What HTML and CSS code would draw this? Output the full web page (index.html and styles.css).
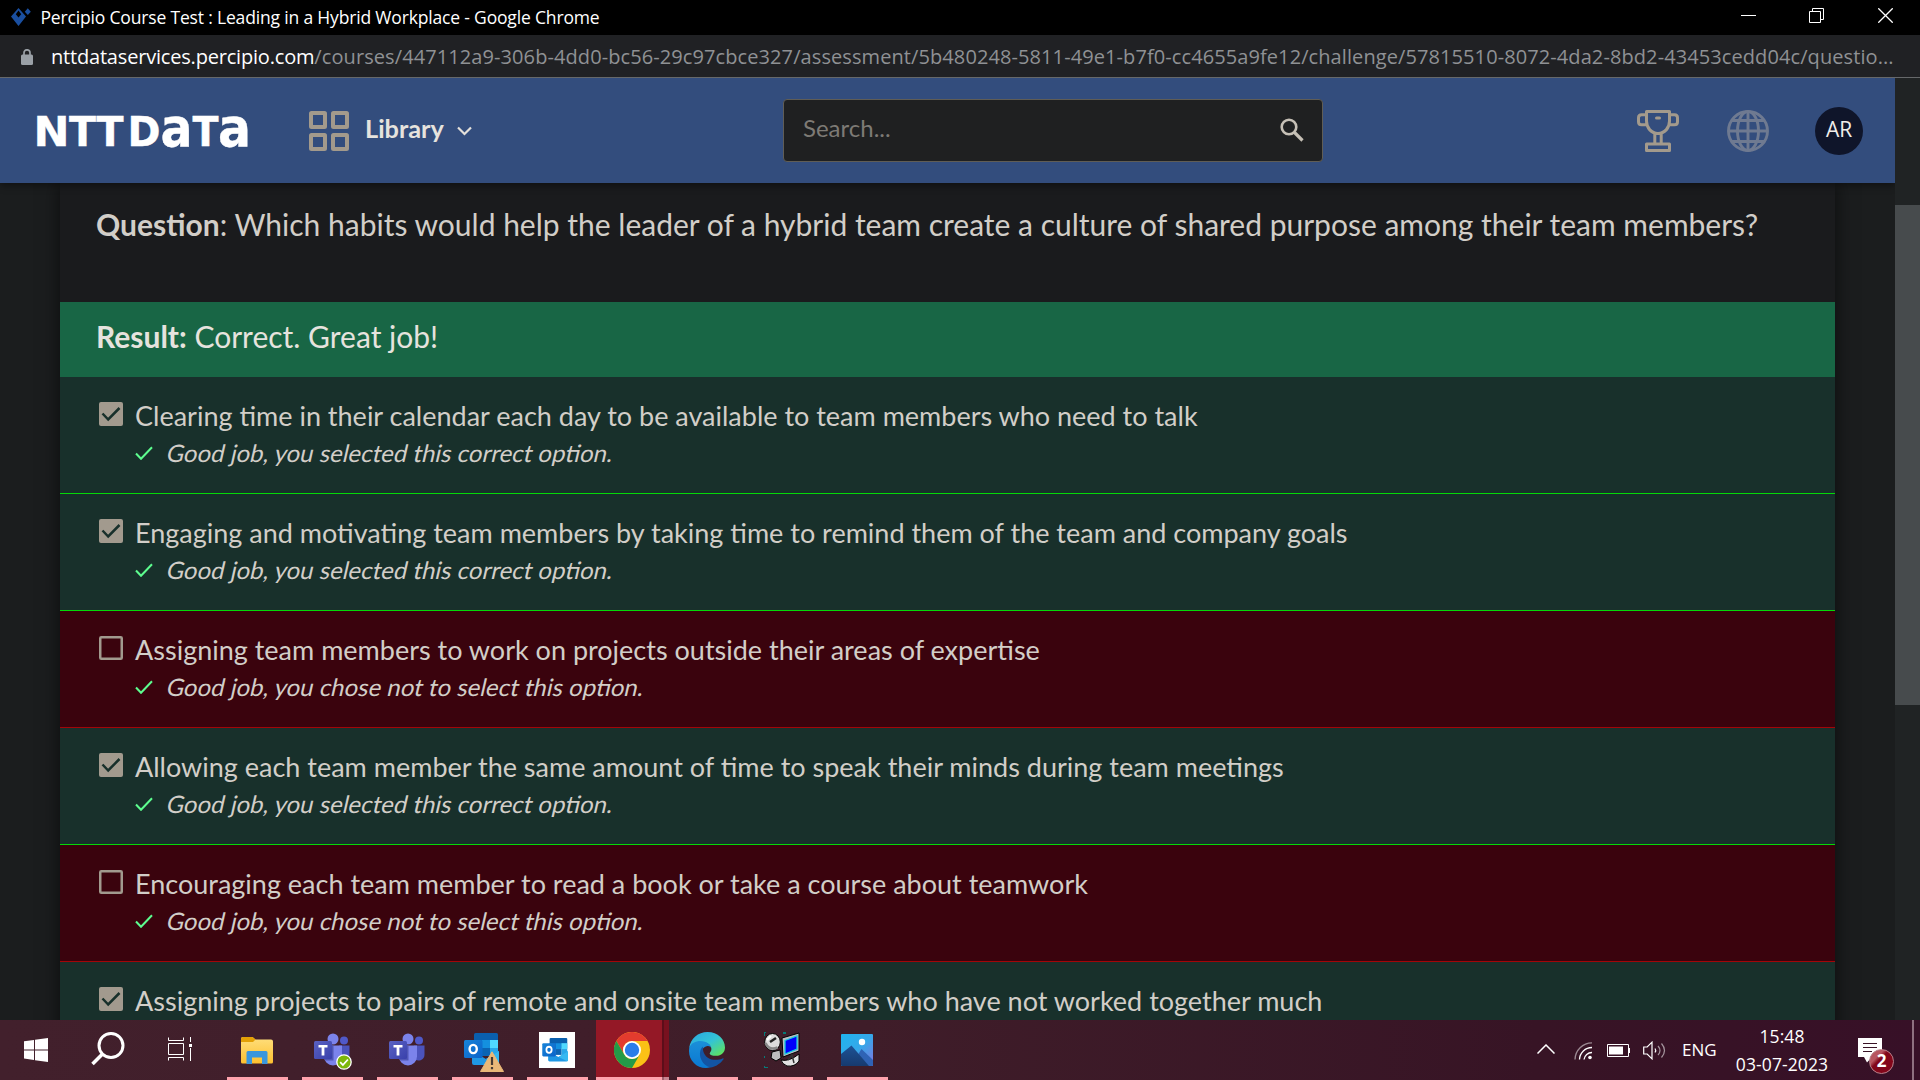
FILE: index.html
```html
<!DOCTYPE html>
<html lang="en">
<head>
<meta charset="utf-8">
<title>Percipio Course Test : Leading in a Hybrid Workplace</title>
<link rel="stylesheet" href="styles.css">
</head>
<body>
<svg width="0" height="0" class="defs" aria-hidden="true">
  <defs>
    <linearGradient id="gFolder" x1="0" y1="0" x2="0" y2="1"><stop offset="0" stop-color="#ffdf7e"/><stop offset="1" stop-color="#fdc02f"/></linearGradient>
    <linearGradient id="gTile" x1="0" y1="0" x2="1" y2="1"><stop offset="0" stop-color="#5a62c3"/><stop offset="1" stop-color="#3940ab"/></linearGradient>
    <linearGradient id="gOut" x1="0" y1="0" x2="1" y2="1"><stop offset="0" stop-color="#1784d9"/><stop offset="1" stop-color="#0a63c9"/></linearGradient>
    <linearGradient id="gEdgeTop" x1="0" y1="0" x2="1" y2="1"><stop offset="0" stop-color="#2aa5e0"/><stop offset=".5" stop-color="#33c3d6"/><stop offset="1" stop-color="#66e84a"/></linearGradient>
    <linearGradient id="gEdge" x1="0" y1="0" x2="0" y2="1"><stop offset="0" stop-color="#1b8fd8"/><stop offset="1" stop-color="#0a78d2"/></linearGradient>
    <linearGradient id="gPhoto" x1="0" y1="0" x2="1" y2="1"><stop offset="0" stop-color="#1fb4ee"/><stop offset=".5" stop-color="#35a8ea"/><stop offset="1" stop-color="#8273dd"/></linearGradient>
    <linearGradient id="gHill" x1="0" y1="0" x2="0" y2="1"><stop offset="0" stop-color="#1d5296"/><stop offset="1" stop-color="#173a6e"/></linearGradient>
    <symbol id="teams" viewBox="0 0 36 34">
      <circle cx="30" cy="7.500" r="4" fill="#5059c9"/>
      <path d="M25 12.500h10.500v9a6 6 0 0 1-10.500 4z" fill="#4b53bc"/>
      <circle cx="19" cy="6" r="5.500" fill="#7b83eb"/>
      <path d="M10 12.500h18v11a9 9 0 0 1-18 0z" fill="#7b83eb"/>
      <path d="M10 12.500h9.500v15h-8q-1.500-2-1.500-4z" fill="#5057b5"/>
      <rect x="0" y="8" width="18" height="18" rx="1.500" fill="url(#gTile)"/>
      <path d="M4.500 12h9v2.600h-3.100v8h-2.800v-8h-3.100z" fill="#fff"/>
    </symbol>
    <symbol id="outlook" viewBox="0 0 36 34">
      <path d="M10 1.500q0-1.500 1.500-1.500h21q1.500 0 1.500 1.500v13h-24z" fill="#0a5fae"/>
      <path d="M18 7h8v8h-8zM10 15h8v8h-8z" fill="#1490df"/>
      <path d="M26 7h8v8h-8z" fill="#50d9ff"/><path d="M10 7h8v8h-8z" fill="#0b6bbd"/>
      <path d="M26 15h8v8h-8z" fill="#28a8ea"/><path d="M18 15h8v8h-8z" fill="#0b64b4"/>
      <path d="M8 18l14 8 13-8v12q0 2-2 2h-23q-2 0-2-2z" fill="#1f97e4"/>
      <path d="M22 26l13-8v12q0 1-1 1.500z" fill="#35b8f1"/>
      <rect x="0" y="7" width="18.500" height="18" rx="1.500" fill="url(#gOut)"/>
      <ellipse cx="9.200" cy="16" rx="3.600" ry="4.100" fill="none" stroke="#fff" stroke-width="2.400"/>
    </symbol>
    <symbol id="tick" viewBox="0 0 18 14"><path d="M1 7.500l5 5.300L17 1.200" fill="none" stroke="#5dfd8f" stroke-width="2"/></symbol>
    <symbol id="on" viewBox="0 0 24 24"><rect width="24" height="24" rx="2" fill="#a29a8e"/><path d="M3.500 11.500l5.700 6L20.500 6" fill="none" stroke="#18302b" stroke-width="2.500"/></symbol>
    <symbol id="off" viewBox="0 0 24 24"><rect x="1.250" y="1.250" width="21.500" height="21.500" rx="1" fill="none" stroke="#a29a8e" stroke-width="2.500"/></symbol>
  </defs>
</svg>

<div class="titlebar">
  <svg class="favicon" width="20" height="18" viewBox="0 0 20 18"><path fill-rule="evenodd" d="M7.500 0l7.500 8.500-7.500 9.500L0 8.500zM7.500 2.500l-2.700 3.800 2.700 3.200 2.700-3.200z" fill="#1a4fa0"/><path d="M16.800 .3l3 3.400-3 3.400-3-3.400z" fill="#1a4fa0"/></svg>
  <span class="window-title">Percipio Course Test : Leading in a Hybrid Workplace - Google Chrome</span>
  <div class="controls">
    <svg width="15" height="15"><path d="M0 7.500h15" stroke="#fff"/></svg>
    <svg width="15" height="15" fill="none" stroke="#fff"><path d="M.5 3.500h11v11H.5zM3.500 3.500v-3h11v11h-3"/></svg>
    <svg width="15" height="15"><path d="M.3 .3l14.400 14.400M14.700 .3L.3 14.700" stroke="#fff" stroke-width="1.300"/></svg>
  </div>
</div>
<div class="addressbar">
  <svg class="lock" width="12" height="16" viewBox="0 0 12 16"><rect y="5.500" width="12" height="10.500" rx="1.500" fill="#9aa0a6"/><path d="M3 6V3.800a3 3 0 0 1 6 0V6" fill="none" stroke="#9aa0a6" stroke-width="1.700"/></svg>
  <span class="domain">nttdataservices.percipio.com</span><span class="path">/courses/447112a9-306b-4dd0-bc56-29c97cbce327/assessment/5b480248-5811-49e1-b7f0-cc4655a9fe12/challenge/57815510-8072-4da2-8bd2-43453cedd04c/questio...</span>
</div>

<div class="viewport">
  <div class="page">
    <header class="header">
      <svg class="logo" width="228" height="80" viewBox="-8 -22 228 80" aria-label="NTT DATA">
        <g class="logo-text">
          <text x="-3.500" y="33" textLength="36" lengthAdjust="spacingAndGlyphs">N</text>
          <text x="32" y="33" textLength="27" lengthAdjust="spacingAndGlyphs">T</text>
          <text x="59.500" y="33" textLength="27" lengthAdjust="spacingAndGlyphs">T</text>
          <text x="90.500" y="33" textLength="33" lengthAdjust="spacingAndGlyphs">D</text>
          <text x="123.500" y="33" textLength="32" lengthAdjust="spacingAndGlyphs" class="low">a</text>
          <text x="155.500" y="33" textLength="26" lengthAdjust="spacingAndGlyphs">T</text>
          <text x="181" y="33" textLength="33" lengthAdjust="spacingAndGlyphs" class="low">a</text>
        </g>
      </svg>
      <svg class="grid-icon" width="40" height="40" fill="none" stroke="#a39a8c" stroke-width="4"><rect x="2" y="2" width="14" height="14" rx=".5"/><rect x="24" y="2" width="14" height="14" rx=".5"/><rect x="2" y="24" width="14" height="14" rx=".5"/><rect x="24" y="24" width="14" height="14" rx=".5"/></svg>
      <span class="library">Library</span>
      <svg class="chev" width="15" height="10"><path d="M1 1.500l6.500 6.500L14 1.500" fill="none" stroke="#e4e0da" stroke-width="2.200"/></svg>
      <div class="search">
        <span>Search...</span>
        <svg width="24" height="24" fill="none" stroke="#c6c0b6"><circle cx="9" cy="9" r="7.300" stroke-width="2.600"/><path d="M14.500 14.500l8 8" stroke-width="3.200"/></svg>
      </div>
      <svg class="trophy" width="42" height="42" fill="none" stroke="#a39a8c" stroke-width="3" stroke-linejoin="round"><path d="M9.500 1.500h23v9.500c0 7-5 12.500-11.500 12.500S9.500 18 9.500 11zM9.500 4.800H4.500q-3 0-3 3v4q0 3 3 3h6M32.500 4.800h5q3 0 3 3v4q0 3-3 3h-6M17.800 24v9.500M24.200 24v9.500M9.500 34h23v6.500h-23z"/><path d="M19.500 8h3" stroke-linecap="round"/></svg>
      <svg class="globe" width="42" height="42" fill="none" stroke="#6f7a91" stroke-width="2.900"><circle cx="21" cy="21" r="19.500"/><ellipse cx="21" cy="21" rx="10.500" ry="19.500"/><path d="M21 1v40M1 21h40M5 10.500h32M5 31.500h32"/></svg>
      <div class="avatar">AR</div>
    </header>
    <main class="content">
      <section class="card">
        <div class="question"><b>Question</b>: Which habits would help the leader of a hybrid team create a culture of shared purpose among their team members?</div>
        <div class="result"><b>Result:</b> Correct. Great job!</div>
        <div class="option good"><svg class="box"><use href="#on"/></svg><div><p>Clearing time in their calendar each day to be available to team members who need to talk</p><p class="note"><svg><use href="#tick"/></svg><span>Good job, you selected this correct option.</span></p></div></div>
        <div class="option good"><svg class="box"><use href="#on"/></svg><div><p>Engaging and motivating team members by taking time to remind them of the team and company goals</p><p class="note"><svg><use href="#tick"/></svg><span>Good job, you selected this correct option.</span></p></div></div>
        <div class="option bad"><svg class="box"><use href="#off"/></svg><div><p>Assigning team members to work on projects outside their areas of expertise</p><p class="note"><svg><use href="#tick"/></svg><span>Good job, you chose not to select this option.</span></p></div></div>
        <div class="option good"><svg class="box"><use href="#on"/></svg><div><p>Allowing each team member the same amount of time to speak their minds during team meetings</p><p class="note"><svg><use href="#tick"/></svg><span>Good job, you selected this correct option.</span></p></div></div>
        <div class="option bad"><svg class="box"><use href="#off"/></svg><div><p>Encouraging each team member to read a book or take a course about teamwork</p><p class="note"><svg><use href="#tick"/></svg><span>Good job, you chose not to select this option.</span></p></div></div>
        <div class="option good last"><svg class="box"><use href="#on"/></svg><div><p>Assigning projects to pairs of remote and onsite team members who have not worked together much</p></div></div>
      </section>
    </main>
  </div>
  <div class="scrollbar"><div class="thumb"></div></div>
</div>

<footer class="taskbar">
  <div class="slot start"><svg width="24" height="24" fill="#fff"><path d="M0 3.300l10-1.400v9.500H0zM11 1.700L24 0v11.400H11zM0 12.400h10v9.500L0 20.600zM11 12.400h13V24l-13-1.800z"/></svg></div>
  <div class="slot find"><svg width="34" height="34" fill="none" stroke="#fff"><circle cx="20" cy="13.500" r="12" stroke-width="3"/><path d="M11.500 22L1.500 32" stroke-width="3.600"/></svg></div>
  <div class="slot tasks"><svg width="24" height="24" fill="none" stroke="#fff"><path d="M.5 .5v3h15v-3M.5 6.500h15v11H.5zM.5 23.500v-3h15v3M22.500 0v5M22.500 11v13"/><path d="M21 7h3v3h-3z" fill="#fff" stroke="none"/></svg></div>

  <div class="slot app"><svg width="32" height="27"><path d="M0 2q0-2 2-2h9.500l3 2.500H30q2 0 2 2V25q0 1.500-1.500 1.500h-29Q0 26.500 0 25z" fill="url(#gFolder)"/><path d="M0 2q0-2 2-2h9.500l3 2.500-2.500 2.500H0z" fill="#e3a006"/><path d="M5.500 15.500q0-1.500 1.500-1.500h18q1.500 0 1.500 1.500V27H21v-6.500H11V27H5.500z" fill="#3a96dd"/></svg></div>
  <div class="slot app"><div class="stack"><svg width="36" height="34"><use href="#teams"/></svg><svg class="status" width="16" height="16"><circle cx="8" cy="8" r="7.200" fill="#7db70a" stroke="#fff" stroke-width="1.300"/><path d="M4.200 8.200l2.700 2.800 5-5.500" fill="none" stroke="#fff" stroke-width="1.800"/></svg></div></div>
  <div class="slot app"><svg width="36" height="34"><use href="#teams"/></svg></div>
  <div class="slot app"><div class="stack"><svg width="36" height="34"><use href="#outlook"/></svg><svg class="warn" width="24" height="21"><path d="M12 .8L23.500 20.500H.5z" fill="#e9b878" stroke="#e9b878" stroke-linejoin="round"/><path d="M12 6v8M12 16v2.200" stroke="#463a33" stroke-width="2.200"/></svg></div></div>
  <div class="slot app"><div class="tile"><svg width="27" height="25"><use href="#outlook"/></svg></div></div>
  <div class="slot app active"><svg width="36" height="36" viewBox="0 0 36 36"><circle cx="18" cy="18" r="18" fill="#fbc116"/><path d="M2.400 9A18 18 0 0 1 33.600 9H18a9 9 0 0 0-7.800 13.500z" fill="#e33b2e"/><path d="M2.400 9A18 18 0 0 0 18 36l7.800-13.500A9 9 0 0 1 10.200 22.500z" fill="#249a48"/><circle cx="18" cy="18" r="9" fill="#fff"/><circle cx="18" cy="18" r="7.200" fill="#2b7de9"/></svg></div>
  <div class="slot app"><svg width="36" height="36" viewBox="0 0 36 36"><path d="M.2 16C1.500 6.500 9 0 18.500 0 29 0 36 7.500 36 15.500c0 5-3.800 8.300-8.800 8.300-4 0-6.500-1.200-6.500-2.400 0-1 1.700-1.700 1.700-4.400 0-3.500-4-7-10-7C7 10 2.500 12.500.2 16z" fill="url(#gEdgeTop)"/><path d="M.2 16C2 11 6.500 9 11.500 9c6.500 0 10.900 3.700 10.900 8 0-2-2-3.300-4-3-4.500.7-7 5-5.500 10 1.600 5.500 7 9.500 13 8.500-3 2.500-6 3.500-9 3.500C7.500 36 0 28.500 0 19z" fill="url(#gEdge)"/><path d="M13.800 14.500c-6 6-2 19 8.200 21 5.500-1 10-4.500 12.500-8.200.4-.8-.2-1.300-1-.9-7.500 3.500-17.500.6-19.300-7.500-.3-1.700-.3-3-.4-4.400z" fill="#1354a3"/></svg></div>
  <div class="slot app"><svg width="36" height="36" viewBox="0 0 36 36"><path d="M0 4V0h2M19 1h3M0 24v2M0 34v2h4" stroke="#067a78" stroke-width="2" fill="none"/><path d="M8 20l8-2 1 8-5 3-5-3z" fill="#bdbdbd" stroke="#000"/><ellipse cx="8.500" cy="10" rx="7.800" ry="8.500" fill="#dcdcdc" stroke="#000"/><path d="M1.500 11Q5 19 13.500 15.500" stroke="#888" stroke-width="2.500" fill="none"/><path d="M6 10l6-4" stroke="#222" stroke-width="2.500"/><path d="M3 8l4-4" stroke="#fff" stroke-width="2"/><path d="M18 6L35 1v18l-16 6z" fill="#b9bbc2" stroke="#000"/><path d="M21 8.500L33 4v13l-12 5z" fill="#0000fa" stroke="#16c9dc" stroke-width="1.300"/><path d="M17 28q8 2 18-6v7q-4 6-12 5-5-2-6-6z" fill="#e2e2e2" stroke="#000"/><path d="M24 28l4-5 2 8" fill="none" stroke="#333" stroke-width="1.500"/></svg></div>
  <div class="slot app"><svg width="32" height="32"><rect width="32" height="32" rx="1" fill="url(#gPhoto)"/><path d="M15 24l5.500-9 11.500 11v5q0 1-1 1H17z" fill="#2f63b5"/><path d="M0 20l10.500-8.500L28 32H1q-1 0-1-1z" fill="url(#gHill)"/><circle cx="21" cy="8" r="3.200" fill="#fff"/></svg></div>

  <div class="tray">
    <svg class="up" width="18" height="10"><path d="M.5 9.500L9 1l8.500 8.500" fill="none" stroke="#fff" stroke-width="1.500"/></svg>
    <svg class="wifi" width="19" height="18" fill="none" stroke="#fff" stroke-width="1.300"><path d="M1 17.500A17 17 0 0 1 18 .8" opacity=".5"/><path d="M5.500 17.500A12.500 12.500 0 0 1 18 5.500M10 17.500a8 8 0 0 1 8-7"/><circle cx="16" cy="15.500" r="1.800" fill="#fff" stroke="none"/></svg>
    <svg class="battery" width="23" height="13"><path d="M.5 .5h21v12H.5z" fill="none" stroke="#fff"/><path d="M2 2.500h14v8H2zM21 4h2v5h-2z" fill="#fff"/></svg>
    <svg class="sound" width="23" height="19" fill="none" stroke="#fff" stroke-width="1.200"><path d="M.7 6h3.500L9 1.200v16.600L4.200 13H.7z"/><path d="M12 7.500q1.500 2 0 4"/><path d="M15 5q4 4.500 0 9M18.500 2.500q6 7 0 14" opacity=".55"/></svg>
    <span class="lang">ENG</span>
    <div class="clock"><span>15:48</span><span>03-07-2023</span></div>
    <div class="notify"><svg width="24" height="26"><path d="M0 0h24v19H14l-5 5.500-3-5.500H0z" fill="#fff"/><path d="M5 5.500h14M5 9.500h14M5 13.500h9" stroke="#3a1327"/></svg><span class="count">2</span></div>
    <div class="peek"></div>
  </div>
</footer>
</body>
</html>
```
FILE: styles.css
```css
* { box-sizing: border-box; }
body {
  margin: 0;
  width: 1920px;
  height: 1080px;
  overflow: hidden;
  display: flex;
  flex-direction: column;
  background: #1b1d1e;
  color: #d2cec8;
  font-family: Lato, "Noto Sans", sans-serif;
}
svg { display: block; flex: none; }
p { margin: 0; }
.defs { position: absolute; }

/* Browser window */
.titlebar {
  flex: none;
  height: 35px;
  display: flex;
  align-items: center;
  padding: 0 27px 2px 11px;
  background: #000;
  color: #fff;
  font: 17.500px "Open Sans", "Noto Sans", sans-serif;
  letter-spacing: -.17px;
}
.favicon { margin-right: 9.500px; }
.window-title { white-space: nowrap; }
.controls { margin: 0 0 2px auto; display: flex; gap: 53px; }
.controls svg:last-child { margin-left: 1px; }
.addressbar {
  flex: none;
  height: 43px;
  display: flex;
  align-items: center;
  padding-left: 21px;
  background: #202124;
  border-bottom: 1px solid #66686a;
  font: 20px "Open Sans", "Noto Sans", sans-serif;
  white-space: nowrap;
}
.lock { margin: 1px 18px 0 0; }
.domain { color: #fff; letter-spacing: -.19px; }
.path { color: #8f9194; letter-spacing: .09px; }

.viewport { flex: 1; min-height: 0; display: flex; }
.page { width: 1895px; display: flex; flex-direction: column; overflow: hidden; }
.scrollbar { width: 25px; background: #202324; padding-top: 127px; }
.thumb { height: 500px; background: #474b4d; }

/* Site header */
.header {
  flex: none;
  position: relative;
  z-index: 1;
  height: 105px;
  display: flex;
  align-items: center;
  padding: 0 32px 0 29px;
  background: #334d7d;
  box-shadow: 0 2px 8px rgba(0, 0, 0, .45);
}
.logo-text { font: bold 41px "DejaVu Sans", sans-serif; fill: #fff; stroke: #fff; stroke-width: .4px; }
.logo-text .low { font-size: 53px; }
.grid-icon { margin: 1px 16px 0 52px; }
.library { width: 80px; font-weight: 700; font-size: 25.300px; color: #e6e3de; margin-top: -5px; }
.chev { margin-left: 12px; }
.search {
  width: 540px;
  height: 63px;
  margin-left: 311px;
  display: flex;
  align-items: center;
  justify-content: space-between;
  padding: 0 18px 0 19px;
  background: #1f2021;
  border: 1px solid #605d55;
  border-radius: 4px;
  font-size: 24px;
  color: #7d7a75;
}
.search span { margin-top: -6px; }
.search svg { margin-top: -2px; }
.trophy { margin-left: 314px; }
.globe { margin-left: 48px; }
.avatar {
  width: 48px;
  height: 48px;
  margin-left: 46px;
  display: flex;
  align-items: center;
  justify-content: center;
  border-radius: 50%;
  background: #0f152a;
  color: #f0eeea;
  font: 21px "Open Sans", "Noto Sans", sans-serif;
  padding-bottom: 3px;
}

/* Question review */
.content { flex: 1; min-height: 0; padding: 0 60px; overflow: hidden; }
.card { height: 900px; background: #1a1b1d; box-shadow: 0 0 18px rgba(0, 0, 0, .6); }
.question, .result { padding-left: 36px; font-size: 30px; line-height: 36px; white-space: nowrap; }
.question { height: 119px; padding-top: 23px; }
.result { height: 75px; padding-top: 16px; background: #186645; color: #e6e3de; }
.option {
  height: 117px;
  display: flex;
  padding: 21px 0 0 39px;
  border-bottom: 1px solid #04d908;
  font-size: 27px;
  line-height: 36px;
  white-space: nowrap;
}
.good { background: #18302b; }
.bad { background: #3a030d; border-bottom-color: #a30508; }
.last { border-bottom: 0; }
.box { width: 24px; height: 24px; margin: 4px 12px 0 0; }
.note { display: flex; font-size: 24px; padding-top: 1px; }
.note span { transform: skewX(-13deg); transform-origin: 0 28px; }
.note svg { width: 18px; height: 14px; margin: 11px 12px 0 0; }

/* Windows taskbar */
.taskbar {
  flex: none;
  height: 60px;
  display: flex;
  background: linear-gradient(90deg, #42202c 0, #3f1d29 45%, #371425 80%, #371027 100%);
  color: #fff;
  font: 17.500px/28px "Open Sans", "Noto Sans", sans-serif;
}
.slot { display: flex; align-items: center; justify-content: center; }
.start { width: 72px; }
.find { width: 71px; padding-bottom: 3px; }
.tasks { width: 72px; margin: 0 4px 0 1px; }
.tasks svg { margin-bottom: 2px; }
.app { width: 75px; position: relative; padding-right: 1px; }
.app::after {
  content: "";
  position: absolute;
  left: 7px;
  bottom: 0;
  width: 61px;
  height: 3px;
  background: #ffa3ad;
}
.active { background: linear-gradient(90deg, transparent 1px, #941826 1px, #941826 67px, #5c0e1a 67px, #5c0e1a 69px, #78111f 69px, #78111f 74px, transparent 74px); }
.active::after { left: 1px; width: 73px; background: linear-gradient(90deg, #ffa3ad 66px, #a0606b 66px, #a0606b 68px, #c78590 68px); }
.stack { position: relative; }
.status { position: absolute; right: -2px; bottom: -3px; }
.warn { position: absolute; right: -4px; bottom: -5px; }
.tile { width: 36px; height: 36px; display: flex; align-items: center; justify-content: center; padding-right: 4px; background: #fff; }

.tray { flex: 1; display: flex; align-items: center; padding-left: 642px; }
.up { margin-bottom: 2px; }
.wifi { margin-left: 19px; margin-top: 2px; }
.battery { margin-left: 14px; margin-top: 1px; }
.sound { margin-left: 13px; }
.lang { width: 36px; margin-left: 16px; font-size: 17px; }
.clock { width: 96px; margin-left: 16px; display: flex; flex-direction: column; align-items: center; letter-spacing: .1px; }
.notify { position: relative; margin-left: 28px; padding-top: 1px; }
.count {
  position: absolute;
  left: 11px;
  top: 12px;
  width: 25px;
  height: 25px;
  border: 1px solid #b9808a;
  border-radius: 50%;
  background: linear-gradient(135deg, #b85560 30%, #82061a 42%);
  font: bold 17px/22px "Open Sans", "Noto Sans", sans-serif;
  text-align: center;
}
.peek { width: 2px; height: 60px; margin-left: 30px; background: #8e7080; }
```
